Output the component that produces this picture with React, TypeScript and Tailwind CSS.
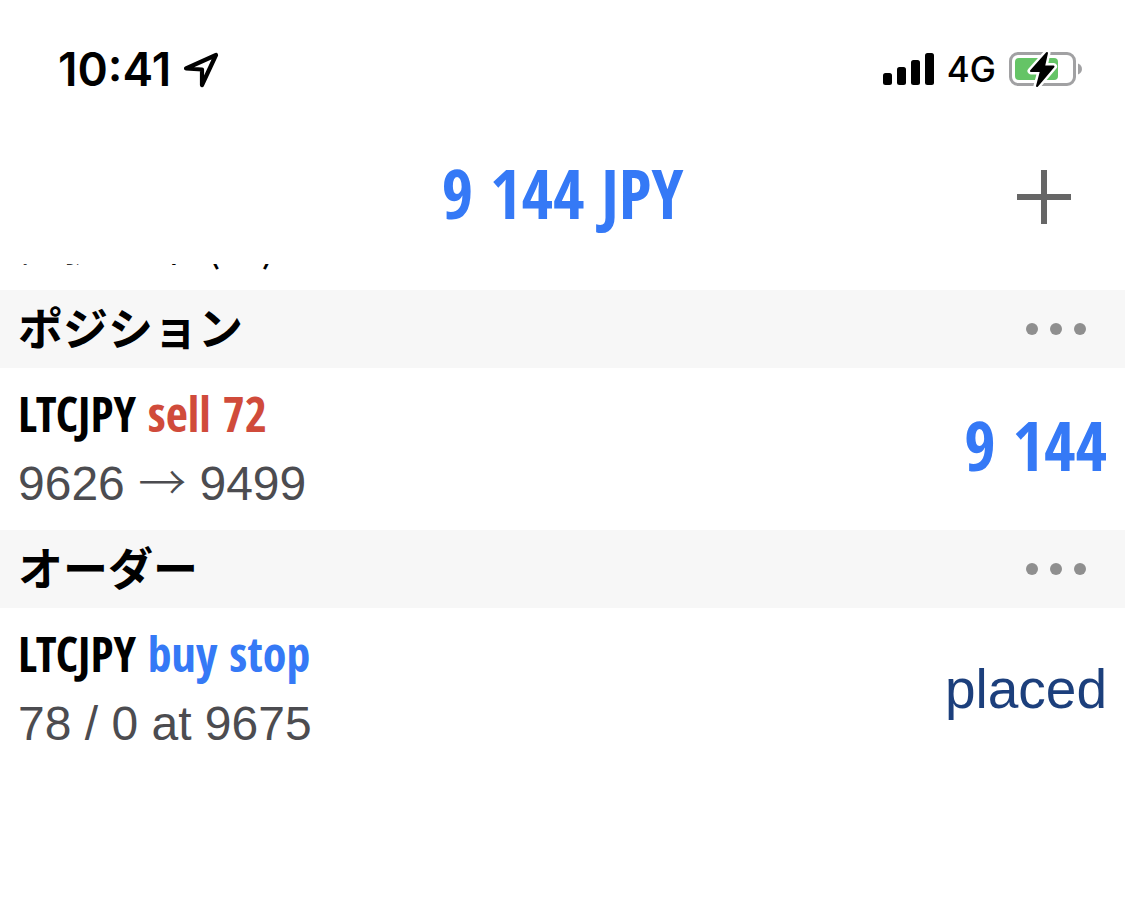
import React from 'react';

interface SectionHeaderProps {
  title: string;
}

interface TradeRowProps {
  symbol: string;
  action: string;
  actionClass: string;
  details: React.ReactNode;
  value: React.ReactNode;
}

const LocationArrow = () => (
  <svg width="38" height="38" viewBox="0 0 38 38" fill="none" aria-hidden="true">
    <path
      d="M3 18.5 L33 5 L19 35 L19 19.5 Z"
      stroke="#000"
      strokeWidth="4.2"
      strokeLinejoin="round"
    />
  </svg>
);

const SignalBars = () => (
  <svg width="51" height="34" viewBox="0 0 51 34" aria-hidden="true">
    <rect x="0" y="21" width="9" height="12" rx="2.5" />
    <rect x="14" y="15" width="9" height="18" rx="2.5" />
    <rect x="28" y="8" width="9" height="25" rx="2.5" />
    <rect x="42" y="1" width="9" height="32" rx="2.5" />
  </svg>
);

const ChargingBattery = () => (
  <svg width="74" height="38" viewBox="0 0 74 38" aria-hidden="true">
    <rect x="1.5" y="3.5" width="64" height="31" rx="7.5" fill="none" stroke="#a1a1a3" strokeWidth="3" />
    <path d="M69 13.5 C74.3 15.5 74.3 22.5 69 24.5 Z" fill="#a1a1a3" />
    <rect x="6" y="8" width="43" height="22" rx="4" fill="#65c466" />
    <path
      d="M38 3 L22 21 H32 L28 36 L44.5 16.5 H35 Z"
      fill="#000"
      stroke="#fff"
      strokeWidth="7"
      strokeLinejoin="round"
      paintOrder="stroke"
    />
    <path
      d="M38 3 L22 21 H32 L28 36 L44.5 16.5 H35 Z"
      stroke="#000"
      strokeWidth="2"
      strokeLinejoin="round"
    />
  </svg>
);

const StatusBar = () => (
  <div className="flex h-[138px] items-center justify-between pr-[42px] pl-[58px]">
    <div className="flex items-center gap-3">
      <span className="font-['Inter',sans-serif] text-[46px] leading-[56px] font-semibold">10:41</span>
      <LocationArrow />
    </div>
    <div className="flex items-center gap-[13px]">
      <SignalBars />
      <span className="font-['Inter',sans-serif] text-[35px] leading-[56px] font-medium">4G</span>
      <ChargingBattery />
    </div>
  </div>
);

const SectionHeader: React.FC<SectionHeaderProps> = ({ title }) => (
  <div className="flex h-[78px] items-center justify-between bg-[#f7f7f7] pr-[39px] pl-[18px]">
    <h2 className="pb-1 font-['Noto_Sans_CJK_JP',sans-serif] text-[45px] leading-[74px] font-bold">{title}</h2>
    <button type="button" aria-label={title} className="flex gap-3">
      <span className="size-3 rounded-full bg-[#8f8f8f]" />
      <span className="size-3 rounded-full bg-[#8f8f8f]" />
      <span className="size-3 rounded-full bg-[#8f8f8f]" />
    </button>
  </div>
);

const TradeRow: React.FC<TradeRowProps> = ({ symbol, action, actionClass, details, value }) => (
  <div className="flex h-[162px] items-center justify-between px-[18px]">
    <div>
      <p className="font-['Open_Sans_Condensed',sans-serif] text-[48px] leading-[70px] font-bold">
        {symbol} <span className={actionClass}>{action}</span>
      </p>
      <p className="font-['Liberation_Sans',sans-serif] text-[48px] leading-[70px] text-[#4c4c50]">{details}</p>
    </div>
    {value}
  </div>
);

const App: React.FC = () => (
  <main className="min-h-screen bg-white text-black">
    <StatusBar />
    <header className="mb-2 grid h-[118px] grid-cols-[1fr_auto_1fr] items-center px-[54px]">
      <h1 className="col-start-2 pb-2 font-['Open_Sans_Condensed',sans-serif] text-[68px] leading-[80px] font-bold text-[#3579f6]">
        9 144 JPY
      </h1>
      <button type="button" aria-label="+" className="justify-self-end">
        <svg width="54" height="54" viewBox="0 0 54 54" aria-hidden="true">
          <path d="M27 0 V54 M0 27 H54" stroke="#666" strokeWidth="6" />
        </svg>
      </button>
    </header>

    {/* last line of the account summary, scrolled under the header */}
    <div className="flex h-[26px] items-end overflow-hidden px-5 pb-5">
      <p className="font-['Noto_Sans_CJK_JP',sans-serif] text-[44px] leading-[56px]">証拠金率 (%)</p>
    </div>

    <section>
      <SectionHeader title="ポジション" />
      <TradeRow
        symbol="LTCJPY"
        action="sell 72"
        actionClass="text-[#d04b3b]"
        details={
          <>
            9626 <span className="font-['Noto_Sans_CJK_JP',sans-serif] leading-none font-light">→</span> 9499
          </>
        }
        value={
          <span className="pb-2 font-['Open_Sans_Condensed',sans-serif] text-[68px] leading-[80px] font-bold text-[#3579f6]">
            9 144
          </span>
        }
      />
    </section>

    <section>
      <SectionHeader title="オーダー" />
      <TradeRow
        symbol="LTCJPY"
        action="buy stop"
        actionClass="text-[#3579f6]"
        details="78 / 0 at 9675"
        value={
          <span className="font-['Liberation_Sans',sans-serif] text-[55px] leading-[80px] text-[#1c3f7c]">placed</span>
        }
      />
    </section>
  </main>
);

export default App;
